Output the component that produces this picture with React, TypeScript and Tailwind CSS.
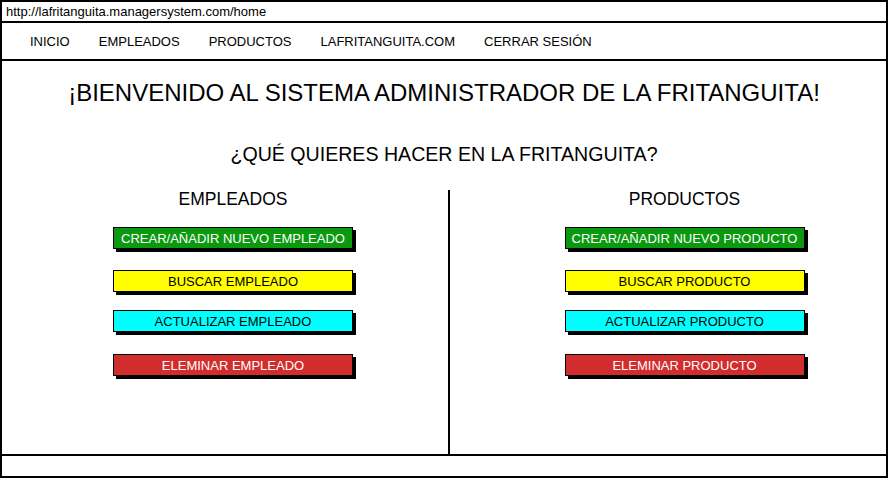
import React from "react";

type Btn = { label: string; cls: string; mt: string };

const Column = ({ title, items, extra }: { title: string; items: Btn[]; extra: string }) => (
  <div className={`flex flex-col items-center ${extra}`}>
    <div className="text-[17.5px] leading-[20px] text-black">{title}</div>
    {items.map((b) => (
      <div
        key={b.label}
        className={`${b.mt} w-[240px] h-[22px] border border-black shadow-[3px_3px_0_#000] flex items-center justify-center text-[13px] leading-none ${b.cls}`}
      >
        {b.label}
      </div>
    ))}
  </div>
);

export default function App() {
  const emp: Btn[] = [
    { label: "CREAR/AÑADIR NUEVO EMPLEADO", cls: "bg-[#0a990f] text-white", mt: "mt-[18px]" },
    { label: "BUSCAR EMPLEADO", cls: "bg-[#ffff00] text-black", mt: "mt-[21px]" },
    { label: "ACTUALIZAR EMPLEADO", cls: "bg-[#00ffff] text-black", mt: "mt-[18px]" },
    { label: "ELEMINAR EMPLEADO", cls: "bg-[#d22d2d] text-white", mt: "mt-[22px]" },
  ];
  const prod: Btn[] = [
    { label: "CREAR/AÑADIR NUEVO PRODUCTO", cls: "bg-[#0a990f] text-white", mt: "mt-[18px]" },
    { label: "BUSCAR PRODUCTO", cls: "bg-[#ffff00] text-black", mt: "mt-[21px]" },
    { label: "ACTUALIZAR PRODUCTO", cls: "bg-[#00ffff] text-black", mt: "mt-[18px]" },
    { label: "ELEMINAR PRODUCTO", cls: "bg-[#d22d2d] text-white", mt: "mt-[22px]" },
  ];
  const nav = ["INICIO", "EMPLEADOS", "PRODUCTOS", "LAFRITANGUITA.COM", "CERRAR SESIÓN"];
  return (
    <div className="w-[890px] h-[480px] bg-white font-['Liberation_Sans',Arial,sans-serif] text-black overflow-hidden">
      <div className="w-[888px] flex flex-col">
        <div className="h-[23px] border-2 border-black flex items-center pl-[4px] text-[13px] leading-none">
          http://lafritanguita.managersystem.com/home
        </div>
        <div className="h-[38px] border-x-2 border-b-2 border-black flex items-center gap-[29px] pl-[28px] text-[13px] leading-none">
          {nav.map((n) => (
            <span key={n}>{n}</span>
          ))}
        </div>
        <div className="h-[395px] border-x-2 border-b-2 border-black flex flex-col">
          <div className="pt-[18px] text-center text-[24px] leading-[28px]">
            ¡BIENVENIDO AL SISTEMA ADMINISTRADOR DE LA FRITANGUITA!
          </div>
          <div className="mt-[36px] text-center text-[19.6px] leading-[22px]">
            ¿QUÉ QUIERES HACER EN LA FRITANGUITA?
          </div>
          <div className="mt-[24px] flex flex-1">
            <Column title="EMPLEADOS" items={emp} extra="w-[446px] pl-[16px]" />
            <div className="w-[2px] mt-[1px] bg-black" />
            <Column title="PRODUCTOS" items={prod} extra="flex-1 pl-[33px]" />
          </div>
        </div>
        <div className="h-[22px] border-x-2 border-b-2 border-black" />
      </div>
    </div>
  );
}
